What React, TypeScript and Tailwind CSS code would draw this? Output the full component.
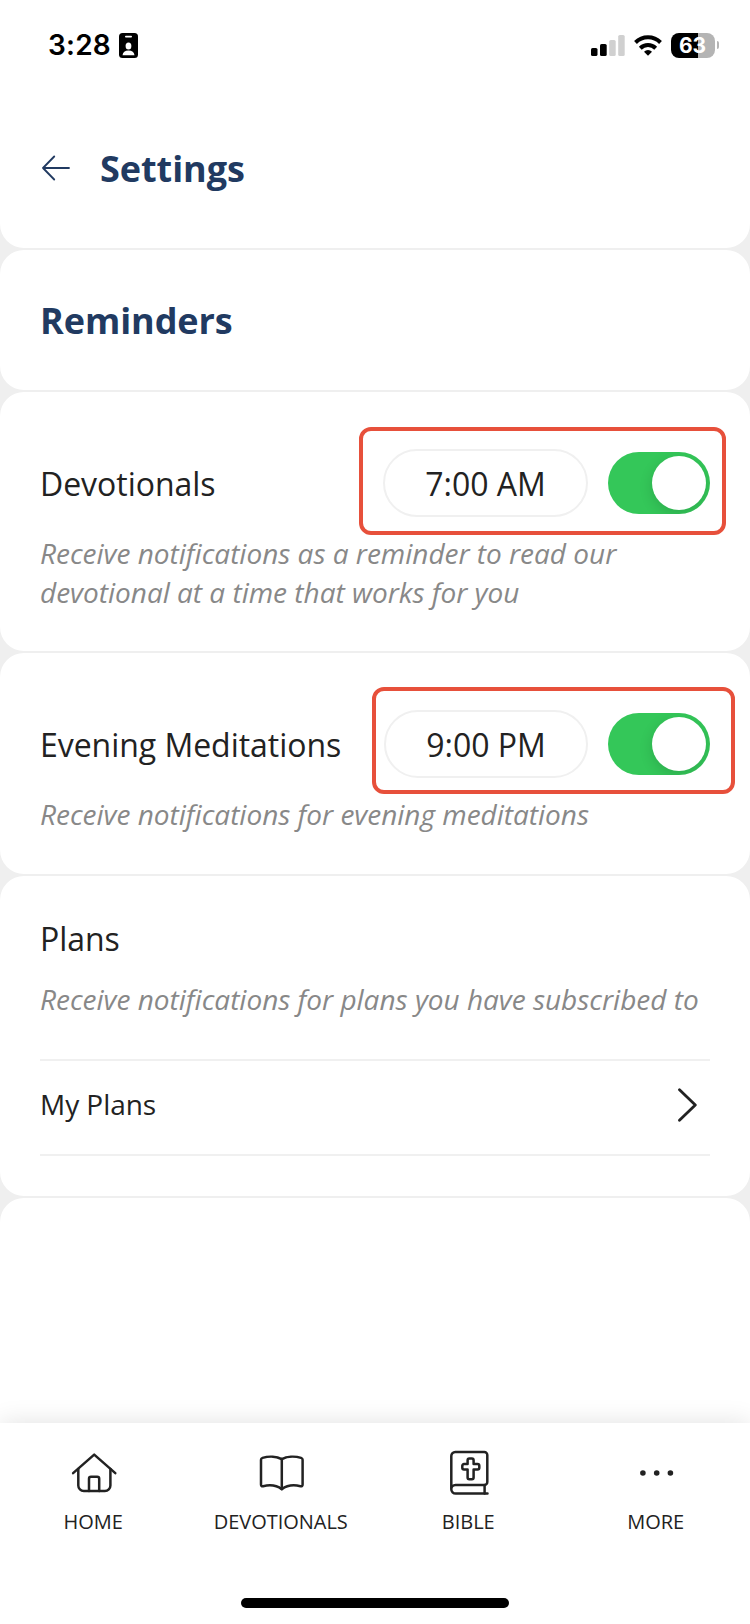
import React, { useState } from 'react';
import clsx from 'clsx';

function StatusBar() {
  return (
    <div className="flex h-[90px] items-center justify-between pl-12 pr-[31px] text-black">
      <div className="flex items-center gap-[9px]">
        <span className="w-[62px] whitespace-nowrap font-['Inter',sans-serif] text-[28px] font-semibold leading-none tracking-[0.2px]">
          3:28
        </span>
        <svg width="19" height="25" viewBox="0 0 19 25" aria-hidden="true">
          <rect width="19" height="25" rx="3.500" fill="#000" />
          <rect x="6" y="2.700" width="7" height="1.800" rx="0.900" fill="#fff" />
          <ellipse cx="9.500" cy="13" rx="2.900" ry="3.500" fill="#fff" />
          <path d="M3.500 22.200c.3-3.200 2.400-4.800 6-4.800s5.700 1.600 6 4.800z" fill="#fff" />
        </svg>
      </div>
      <div className="flex items-center gap-[9px]">
        <svg width="34" height="21" viewBox="0 0 34 21" aria-hidden="true">
          <rect y="13" width="6.500" height="8" rx="1.600" fill="#000" />
          <rect x="9" y="9" width="6.700" height="12" rx="1.600" fill="#000" />
          <rect x="18.200" y="5" width="6.500" height="16" rx="1.600" fill="#d0d0d0" />
          <rect x="27.200" width="6.500" height="21" rx="1.600" fill="#d0d0d0" />
        </svg>
        <svg width="28" height="21" viewBox="0 0 28 21" fill="none" aria-hidden="true">
          <path d="M1.500 7.500a17.800 17.800 0 0 1 25 0" stroke="#000" strokeWidth="4" />
          <path d="M6.300 13.200a11 11 0 0 1 15.400 0" stroke="#000" strokeWidth="4" />
          <path d="M14 20.800l-4-4.100a5.800 5.800 0 0 1 8 0z" fill="#000" />
        </svg>
        <div className="flex items-center gap-[2px]">
          <div className="flex h-[25px] w-11 items-center justify-center rounded-[8px] bg-linear-to-r from-black from-[62%] to-[#b4b4b4] to-[62%] pr-px font-['Inter',sans-serif] text-[21px] font-bold leading-none text-white">
            63
          </div>
          <div className="h-2 w-[2px] rounded-r-full bg-[#b4b4b4]" />
        </div>
      </div>
    </div>
  );
}

function Toggle({ on, onChange }: { on: boolean; onChange: () => void }) {
  return (
    <button
      type="button"
      role="switch"
      aria-checked={on}
      onClick={onChange}
      className={clsx(
        'flex h-[62px] w-[102px] overflow-hidden rounded-full p-1',
        on ? 'justify-end bg-[#34c759]' : 'justify-start bg-[#e9e9ea]'
      )}
    >
      <span className="h-[54px] w-[54px] rounded-full bg-white shadow-[0_4px_14px_rgba(0,0,0,0.14)]" />
    </button>
  );
}

type ReminderProps = {
  title: string;
  time: string;
  description: string;
  className: string;
  pillClass: string;
  highlightClass: string;
};

function Reminder({ title, time, description, className, pillClass, highlightClass }: ReminderProps) {
  const [on, setOn] = useState(true);
  return (
    <section className={clsx('rounded-[24px] bg-white px-10 pt-[57px]', className)}>
      <div className="relative flex h-[68px] items-center">
        <h2 className="flex-1 pt-[2px] text-[32px] leading-[44px] tracking-[-0.04px]">{title}</h2>
        <button
          type="button"
          className={clsx(
            'mr-5 flex h-[68px] items-center justify-center rounded-full border-2 border-[#f0f0f0] pt-[2px] text-[32px] leading-[44px] tracking-[-0.04px]',
            pillClass
          )}
        >
          {time}
        </button>
        <Toggle on={on} onChange={() => setOn(!on)} />
        <div
          className={clsx(
            'pointer-events-none absolute rounded-[12px] border-4 border-[#e7503b]',
            highlightClass
          )}
        />
      </div>
      <p className="mt-[17px] text-[28px] italic leading-[39px] tracking-[-0.01px] text-[#888]">{description}</p>
    </section>
  );
}

const iconProps = {
  width: 48,
  height: 48,
  viewBox: '0 0 48 48',
  fill: 'none',
  stroke: '#222',
  strokeWidth: 2.5,
  strokeLinecap: 'round' as const,
  strokeLinejoin: 'round' as const,
};

const tabs = [
  {
    label: 'HOME',
    icon: (
      <svg {...iconProps}>
        <path d="M3.100 24.100 24.200 5.600 45.300 24.100" />
        <path d="M8.300 20v16.500a5.500 5.500 0 0 0 5.500 5.500h21.100a5.500 5.500 0 0 0 5.500-5.500V20" />
        <path d="M19 42V29.700a2 2 0 0 1 2-2h6.200a2 2 0 0 1 2 2V42" />
      </svg>
    ),
  },
  {
    label: 'DEVOTIONALS',
    icon: (
      <svg {...iconProps}>
        <path d="M24.800 10.100c-5-2.700-13-3.200-19.300-1.200-1 .3-1.500.9-1.500 1.900v24.700c0 1.400.8 2 2.100 1.700 6-1.500 13.200-1.200 18.700 3 5.500-4.200 12.700-4.500 18.700-3 1.300.3 2.100-.3 2.100-1.700V10.800c0-1-.5-1.600-1.500-1.900-6.300-2-14.300-1.500-19.300 1.200z" />
        <path d="M24.800 10.100v30" />
      </svg>
    ),
  },
  {
    label: 'BIBLE',
    icon: (
      <svg {...iconProps}>
        <path d="M6.300 40.200V7a4 4 0 0 1 4-4H39.300a3 3 0 0 1 3 3v27a3 3 0 0 1-3 3H10.500a4.200 4.200 0 0 0-4.200 4.200 4.400 4.400 0 0 0 4.400 4.400H42.500" />
        <path d="M39.600 36v8.600" />
        <path d="M24.300 9.600h2.600a1.700 1.700 0 0 1 1.700 1.700v3.800h4a1.700 1.700 0 0 1 1.700 1.700v1.900a1.700 1.700 0 0 1-1.700 1.700h-4v8.200a1.700 1.700 0 0 1-1.700 1.700h-2.600a1.700 1.700 0 0 1-1.700-1.700v-8.200h-3.600a1.700 1.700 0 0 1-1.700-1.700v-1.900a1.700 1.700 0 0 1 1.700-1.700h3.600v-3.800a1.700 1.700 0 0 1 1.700-1.700z" />
      </svg>
    ),
  },
  {
    label: 'MORE',
    icon: (
      <svg {...iconProps} fill="#222" stroke="none">
        <circle cx="10.900" cy="24" r="2.800" />
        <circle cx="24.700" cy="24" r="2.800" />
        <circle cx="38.400" cy="24" r="2.800" />
      </svg>
    ),
  },
];

export default function App() {
  return (
    <div className="flex h-[1624px] w-[750px] flex-col overflow-hidden bg-[#efefef] font-['Open_Sans','Noto_Sans',sans-serif] text-[#222]">
      <main className="flex flex-1 flex-col gap-[2px]">
        <header className="h-[248px] rounded-b-[24px] bg-white">
          <StatusBar />
          <div className="mt-[54px] flex h-12 items-center gap-[30px] pl-[42px] text-[#213a61]">
            <button type="button" aria-label="Back">
              <svg
                width="28"
                height="26"
                viewBox="0 0 28 26"
                fill="none"
                stroke="currentColor"
                strokeWidth="1.800"
                strokeLinecap="round"
                strokeLinejoin="round"
              >
                <path d="M27 13H1M12.200 1.500 1 13l11.200 11.500" />
              </svg>
            </button>
            <h1 className="pt-[2px] text-[36px] font-bold leading-[48px] tracking-[-0.05px]">Settings</h1>
          </div>
        </header>

        <section className="flex h-[140px] items-center rounded-[24px] bg-white px-10">
          <h2 className="pt-[2px] text-[36px] font-bold leading-[48px] tracking-[-0.08px] text-[#213a61]">Reminders</h2>
        </section>

        <Reminder
          title="Devotionals"
          time="7:00 AM"
          description="Receive notifications as a reminder to read our devotional at a time that works for you"
          className="h-[259px]"
          pillClass="w-[205px]"
          highlightClass="left-[319px] top-[-22px] h-[108px] w-[367px]"
        />

        <Reminder
          title="Evening Meditations"
          time="9:00 PM"
          description="Receive notifications for evening meditations"
          className="h-[221px]"
          pillClass="w-[204px]"
          highlightClass="left-[332px] top-[-23px] h-[107px] w-[363px]"
        />

        <section className="h-[320px] rounded-[24px] bg-white px-10 pt-[41px]">
          <h2 className="text-[32px] leading-[44px] tracking-[-0.04px]">Plans</h2>
          <p className="mt-[19px] whitespace-nowrap text-[28px] italic leading-[39px] tracking-[-0.01px] text-[#888]">
            Receive notifications for plans you have subscribed to
          </p>
          <a
            href="#plans"
            className="mt-[40px] flex h-[97px] items-center justify-between border-y-2 border-[#f0f0f0] pb-[6px] pr-[12px]"
          >
            <span className="pb-[2px] text-[28px] leading-[38px] tracking-[-0.04px]">My Plans</span>
            <svg
              width="21"
              height="34"
              viewBox="0 0 21 34"
              fill="none"
              stroke="#222"
              strokeWidth="2.800"
              strokeLinecap="round"
              strokeLinejoin="round"
            >
              <path d="M2.500 1.700 18.300 17 2.500 32.300" />
            </svg>
          </a>
        </section>

        <div className="flex-1 rounded-t-[24px] bg-white" />
      </main>

      <nav className="flex h-[201px] flex-col bg-white pt-[26px] shadow-[0_0_24px_rgba(0,0,0,0.12)]">
        <div className="grid grid-cols-4">
          {tabs.map((tab) => (
            <a key={tab.label} href="#" className="flex flex-col items-center">
              {tab.icon}
              <span className="mt-[11px] pr-px text-[20px] leading-[28px] tracking-[-0.03px]">{tab.label}</span>
            </a>
          ))}
        </div>
        <div className="mx-auto mb-4 mt-auto h-[10px] w-[268px] rounded-full bg-black" />
      </nav>
    </div>
  );
}
